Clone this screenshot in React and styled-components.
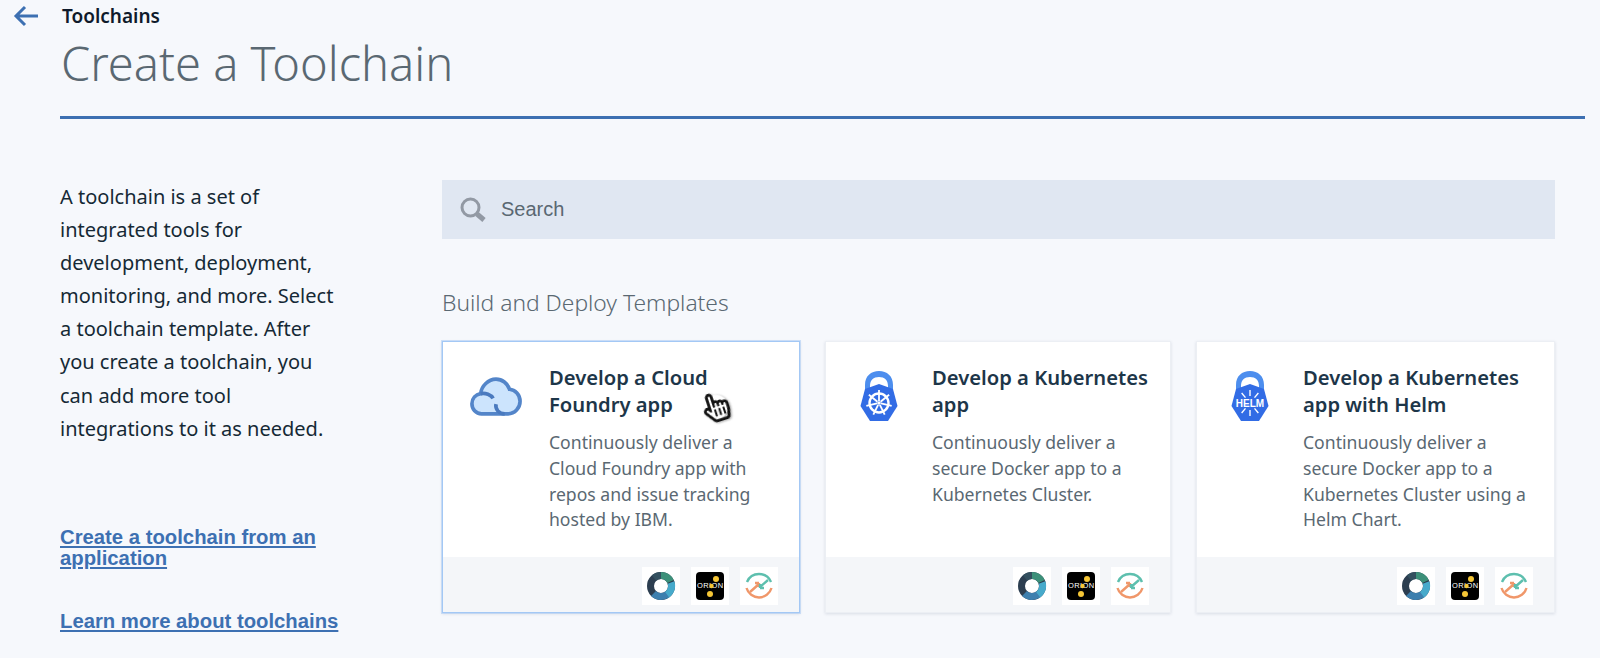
import React from "react";
import styled, { createGlobalStyle } from "styled-components";
import { FaRegHandPointer } from "react-icons/fa";

const Global = createGlobalStyle`
  html, body {
    margin: 0;
    height: 100%;
    background: #f6f8fc;
    overflow: hidden;
  }
  * { box-sizing: border-box; }
`;

const plex = `"Noto Sans", Roboto, sans-serif`;
const helvetica = `"Liberation Sans", Arial, sans-serif`;

const TEMPLATES = [
  {
    title: ["Develop a Cloud", "Foundry app"],
    text: "Continuously deliver a Cloud Foundry app with repos and issue tracking hosted by IBM.",
    icon: "cloud",
    width: 358,
    active: true,
  },
  {
    title: ["Develop a Kubernetes", "app"],
    text: "Continuously deliver a secure Docker app to a Kubernetes Cluster.",
    icon: "kube",
    width: 346,
  },
  {
    title: ["Develop a Kubernetes", "app with Helm"],
    text: "Continuously deliver a secure Docker app to a Kubernetes Cluster using a Helm Chart.",
    icon: "helm",
    width: 359,
  },
];

function BackArrow() {
  return (
    <svg width="26" height="22" viewBox="0 0 26 22" fill="none" stroke="#3d70b2" strokeWidth="3">
      <path d="M25 11H3M12 2l-9 9 9 9" />
    </svg>
  );
}

function SearchGlass() {
  return (
    <svg width="28" height="28" viewBox="0 0 28 28" fill="none">
      <circle cx="11.5" cy="11.5" r="8.5" stroke="#9299a4" strokeWidth="3" />
      <path d="M18 18l7 6" stroke="#9299a4" strokeWidth="5" />
    </svg>
  );
}

function CloudIcon() {
  return (
    <svg width="52" height="41" viewBox="0 0 54 42" fill="none">
      <path
        d="M12 39C6 39 2 34 2 28.5 2 23 6 19 11 18 12 10 19 3 27 3c6.500 0 12 4.500 14 10.500 6 .5 11 5.500 11 12.500 0 7-5.500 13-12.500 13z"
        fill="#cce4fd"
        stroke="#5385c9"
        strokeWidth="3.800"
      />
      <path d="M11 18c5-1 11 1 13 5M27 29c-1 5 3 10 9 10" stroke="#4a7abf" strokeWidth="3.800" />
    </svg>
  );
}

function Lock({ children }) {
  return (
    <svg width="38" height="52" viewBox="0 0 38 52">
      <path d="M5 24V15C5 6 11 1 19 1s14 5 14 14v9h-5V16c0-6-3.500-9-9-9s-9 3-9 9v8z" fill="#4d8eee" />
      <path d="M19 14L33 19 37.500 36 28 51H10L.5 36 5 19z" fill="#326ce5" />
      {children}
    </svg>
  );
}

function Wheel() {
  const spokes = [0, 51, 103, 154, 206, 257, 309];
  return (
    <g stroke="#fff" fill="none">
      <circle cx="19" cy="33" r="9.500" strokeWidth="2.400" />
      {spokes.map((a) => (
        <path key={a} d="M19 31V20" strokeWidth="1.800" transform={`rotate(${a} 19 33)`} />
      ))}
      <circle cx="19" cy="33" r="1.800" fill="#fff" stroke="none" />
    </g>
  );
}

function HelmMark() {
  const rays = [-40, 0, 40];
  return (
    <g>
      <g stroke="#fff" strokeWidth="1.400">
        {rays.map((a) => (
          <path key={a} d="M19 26V20" transform={`rotate(${a} 19 33)`} />
        ))}
        {rays.map((a) => (
          <path key={a} d="M19 40V46" transform={`rotate(${a} 19 33)`} />
        ))}
      </g>
      <text x="19" y="36.500" textAnchor="middle" fontFamily={helvetica} fontWeight="700" fontSize="10" fill="#fff">
        HELM
      </text>
    </g>
  );
}

function TemplateIcon({ name }) {
  if (name === "cloud") return <CloudIcon />;
  return <Lock>{name === "kube" ? <Wheel /> : <HelmMark />}</Lock>;
}

function DonutTool() {
  return (
    <svg width="30" height="30" viewBox="0 0 30 30" fill="none" strokeWidth="7">
      <circle cx="15" cy="15" r="10.500" stroke="#2c3e50" />
      <path d="M8 7A10.500 10.500 0 0 1 15 4.500" stroke="#33505f" />
      <path d="M15 4.500A10.500 10.500 0 0 1 24.500 10.500" stroke="#3c9079" />
      <path d="M25 11.500A10.500 10.500 0 0 1 20 24.300" stroke="#47aacb" />
      <path d="M21 23.500A10.500 10.500 0 0 1 7.500 22.500" stroke="#3d7fae" />
    </svg>
  );
}

function OrionTool() {
  return (
    <OrionTile>
      <OrionLabel>ORION</OrionLabel>
      <OrionDots width="28" height="28" viewBox="0 0 28 28" fill="#f5c636">
        <circle cx="20" cy="7" r="3" />
        <circle cx="15.500" cy="14" r="2.200" />
        <circle cx="14" cy="22" r="3" />
      </OrionDots>
    </OrionTile>
  );
}

function GaugeTool() {
  return (
    <svg width="30" height="30" viewBox="0 0 30 30" fill="none" strokeWidth="2.400">
      <path d="M3 11A13 13 0 0 1 27 11" stroke="#5dbfae" />
      <path d="M2.500 17A13 13 0 0 0 27.500 17" stroke="#f0976a" />
      <path d="M6 21L15 13M15 12h-4M15 12v4" stroke="#f0976a" />
      <path d="M24 9L16 16M16 17h4M16 17v-4" stroke="#5dbfae" />
    </svg>
  );
}

export default function App() {
  return (
    <Page>
      <Global />
      <Header>
        <BackLink>
          <BackArrow />
        </BackLink>
        <Crumb>Toolchains</Crumb>
      </Header>
      <Title>Create a Toolchain</Title>
      <Columns>
        <Sidebar>
          <Intro>
            A toolchain is a set of integrated tools for development, deployment, monitoring, and more. Select a
            toolchain template. After you create a toolchain, you can add more tool integrations to it as needed.
          </Intro>
          <SideLink href="#" $top={82}>Create a toolchain from an application</SideLink>
          <SideLink href="#" $top={41}>Learn more about toolchains</SideLink>
        </Sidebar>
        <Main>
          <SearchBar>
            <SearchGlass />
            <SearchInput placeholder="Search" />
          </SearchBar>
          <SectionTitle>Build and Deploy Templates</SectionTitle>
          <Cards>
            {TEMPLATES.map((t) => (
              <Card key={t.icon} $width={t.width} $active={t.active}>
                <CardBody>
                  <IconSlot>
                    <TemplateIcon name={t.icon} />
                  </IconSlot>
                  <div>
                    <CardTitle>
                      {t.title[0]}
                      <br />
                      {t.title[1]}
                    </CardTitle>
                    <CardText>{t.text}</CardText>
                  </div>
                </CardBody>
                <CardFooter>
                  <Tile><DonutTool /></Tile>
                  <Tile><OrionTool /></Tile>
                  <Tile><GaugeTool /></Tile>
                </CardFooter>
                {t.active && (
                  <Cursor>
                    <FaRegHandPointer />
                  </Cursor>
                )}
              </Card>
            ))}
          </Cards>
        </Main>
      </Columns>
    </Page>
  );
}

const Page = styled.div`
  height: 658px;
  overflow: hidden;
  padding-left: 60px;
  padding-right: 15px;
  font-family: ${plex};
`;

const Header = styled.div`
  position: relative;
  height: 32px;
  display: flex;
  align-items: center;
`;

const BackLink = styled.a`
  position: absolute;
  left: -47px;
  top: 5px;
  line-height: 0;
`;

const Crumb = styled.div`
  padding-left: 2px;
  font-size: 19px;
  font-weight: 600;
  color: #0f1a2b;
`;

const Title = styled.h1`
  margin: 0;
  height: 87px;
  padding-left: 1px;
  border-bottom: 3px solid #3d70b2;
  font-size: 47px;
  line-height: 62px;
  font-weight: 300;
  color: #5a6872;
`;

const Columns = styled.div`
  display: grid;
  grid-template-columns: 382px 1113px;
  padding-top: 61px;
`;

const Sidebar = styled.aside`
  display: flex;
  flex-direction: column;
`;

const Intro = styled.p`
  margin: 0;
  width: 285px;
  font-size: 20px;
  line-height: 33.100px;
  color: #152935;
`;

const SideLink = styled.a`
  margin-top: ${(p) => p.$top}px;
  width: 285px;
  font-family: ${helvetica};
  font-size: 20.300px;
  line-height: 21.500px;
  font-weight: 700;
  color: #3d70b2;
`;

const Main = styled.main`
  display: flex;
  flex-direction: column;
`;

const SearchBar = styled.div`
  height: 59px;
  display: flex;
  align-items: center;
  gap: 12px;
  padding-left: 17px;
  background: #e0e7f2;
`;

const SearchInput = styled.input`
  flex: 1;
  border: 0;
  outline: 0;
  background: transparent;
  font-family: ${helvetica};
  font-size: 20px;
  color: #5a6872;

  &::placeholder {
    color: #5a6872;
    opacity: 1;
  }
`;

const SectionTitle = styled.h2`
  margin: 50px 0 24px;
  font-size: 22.800px;
  line-height: 28px;
  font-weight: 300;
  color: #5a6872;
`;

const Cards = styled.div`
  display: flex;
  gap: 25px;
`;

const Card = styled.article`
  position: relative;
  width: ${(p) => p.$width}px;
  height: 272px;
  display: flex;
  flex-direction: column;
  background: #fff;
  border: 1px solid ${(p) => (p.$active ? "#a3c8f5" : "#eceff4")};
  outline: ${(p) => (p.$active ? "1px solid rgba(163, 200, 245, 0.5)" : "none")};
  box-shadow: 0 1px 3px rgba(40, 60, 90, 0.14);
`;

const CardBody = styled.div`
  flex: 1;
  display: flex;
  padding: 22px 20px 0 26px;
`;

const IconSlot = styled.div`
  flex: 0 0 80px;
  height: 64px;
  display: flex;
  align-items: center;
  justify-content: center;
  padding-right: 26px;
`;

const CardTitle = styled.h3`
  margin: 0;
  font-size: 20.200px;
  line-height: 27px;
  font-weight: 600;
  color: #1d3649;
`;

const CardText = styled.p`
  margin: 12px 0 0;
  font-size: 17.600px;
  line-height: 25.800px;
  color: #5a6872;
`;

const CardFooter = styled.div`
  height: 55px;
  display: flex;
  justify-content: flex-end;
  gap: 11px;
  padding: 10px 21px 0 0;
  background: #f4f6f9;
`;

const Tile = styled.div`
  width: 38px;
  height: 38px;
  display: flex;
  align-items: center;
  justify-content: center;
  background: #fff;
`;

const OrionTile = styled.div`
  position: relative;
  width: 28px;
  height: 28px;
  border-radius: 4px;
  background: #000;
`;

const OrionLabel = styled.span`
  position: absolute;
  left: 1px;
  top: 10px;
  font-family: ${helvetica};
  font-size: 7.500px;
  line-height: 8px;
  letter-spacing: 0.4px;
  color: #fff;
`;

const OrionDots = styled.svg`
  position: absolute;
  left: 0;
  top: 0;
`;

const Cursor = styled.div`
  position: absolute;
  left: 258px;
  top: 50px;
  font-size: 30px;
  line-height: 0;
  color: #111;
  transform: rotate(-18deg);
  filter: drop-shadow(1px 1px 1px rgba(0, 0, 0, 0.35));

  svg {
    background: radial-gradient(circle, #fff 55%, transparent 60%);
  }
`;
